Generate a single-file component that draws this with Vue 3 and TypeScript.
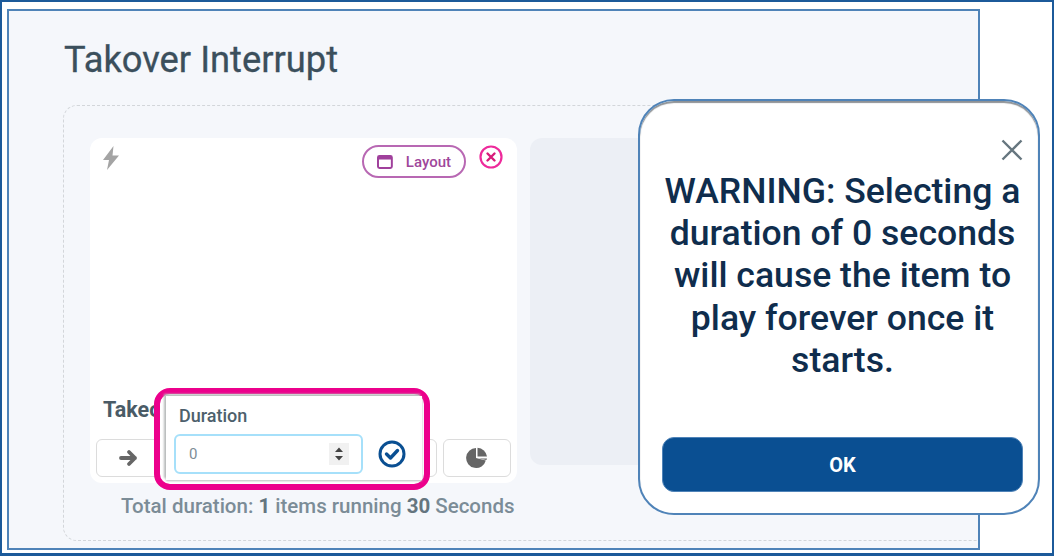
<template>
  <div class="frame">
    <section class="panel">
      <h1 class="title">Takover Interrupt</h1>
      <div class="dropzone">
        <div class="column">
          <div class="card">
            <div class="card-top">
              <svg class="bolt" width="18" height="24" viewBox="0 0 18 24">
                <path d="M11.500 0 1 14h6L5 24 17 9.500h-6.500z" fill="#a4a4a4" />
              </svg>
              <button class="layout-btn">
                <svg width="16" height="14" viewBox="0 0 16 14">
                  <rect x="1" y="1" width="14" height="12" rx="1.500" fill="none" stroke="#a0409c" stroke-width="2" />
                  <rect x="1" y="1" width="14" height="3.500" fill="#a0409c" />
                </svg>
                <span>Layout</span>
              </button>
              <svg class="remove" width="24" height="24" viewBox="0 0 24 24">
                <circle cx="12" cy="12" r="10.500" fill="none" stroke="#ee2a9b" stroke-width="2.200" />
                <path d="m8.500 8.500 7 7m0-7-7 7" stroke="#d81b7a" stroke-width="2.400" stroke-linecap="round" />
              </svg>
            </div>
            <h2 class="card-name">Takeo</h2>
            <div class="actions">
              <button class="action action-first">
                <svg width="20" height="18" viewBox="0 0 20 18">
                  <path d="M2 9h14M10 3l6 6-6 6" fill="none" stroke="#666" stroke-width="3.800" stroke-linecap="round" stroke-linejoin="round" />
                </svg>
              </button>
              <button v-for="n in 3" :key="n" class="action"></button>
              <button class="action action-last">
                <svg width="22" height="22" viewBox="0 0 22 22">
                  <path d="M10 1a10 10 0 1 0 9.800 12.500L10 11z" fill="#666" />
                  <path d="M11.500 .8A10 10 0 0 1 21 9.500h-9.500z" fill="#666" />
                  <path d="M12.500 11.500H21a10 10 0 0 1-.6 1.500z" fill="#666" />
                </svg>
              </button>
            </div>
          </div>
          <p class="total">Total duration: <b>1</b> items running <b>30</b> Seconds</p>
        </div>
        <div class="card-empty"></div>
      </div>
    </section>

    <div class="highlight">
      <div class="popover">
        <label class="pop-label">Duration</label>
        <div class="pop-row">
          <div class="field">
            <span>{{ duration }}</span>
            <span class="spin">
              <svg width="10" height="16" viewBox="0 0 10 16">
                <path d="M5 1.500 9 6H1zM1 10h8l-4 4.500z" fill="#444" />
              </svg>
            </span>
          </div>
          <svg width="28" height="28" viewBox="0 0 28 28">
            <circle cx="14" cy="14" r="12" fill="none" stroke="#0a4f92" stroke-width="3" />
            <path d="m8.500 14 4 4 7-7.500" fill="none" stroke="#0a4f92" stroke-width="3.400" stroke-linecap="round" stroke-linejoin="round" />
          </svg>
        </div>
      </div>
    </div>

    <div class="modal">
      <svg class="modal-close" width="22" height="22" viewBox="0 0 22 22">
        <path d="m1.500 1.500 19 19m0-19-19 19" stroke="#66767f" stroke-width="2.400" />
      </svg>
      <p class="modal-text">WARNING: Selecting a duration of 0 seconds will cause the item to play forever once it starts.</p>
      <button class="ok">OK</button>
    </div>
  </div>
</template>

<script setup lang="ts">
import { ref } from 'vue'

const duration = ref<number>(0)
</script>

<style>
html,
body {
  margin: 0;
  background: #fff;
}
</style>

<style scoped>
.frame {
  position: relative;
  box-sizing: border-box;
  width: 1054px;
  height: 556px;
  padding: 7px 0 0 5px;
  border: 2px solid #1c5a9a;
  border-bottom-width: 3px;
  background: #fff;
  font-family: Roboto, "Liberation Sans", sans-serif;
  overflow: hidden;
}

.panel {
  box-sizing: border-box;
  width: 973px;
  height: 541px;
  padding: 29px 0 0 54px;
  border: 2px solid #4f83b8;
  background: #f5f7fb;
  overflow: hidden;
}

.title {
  margin: 0 0 25px 1px;
  font-size: 36.300px;
  line-height: 40px;
  font-weight: 400;
  color: #3b4f5c;
  -webkit-text-stroke: 0.3px #3b4f5c;
}

.dropzone {
  display: flex;
  gap: 13px;
  box-sizing: border-box;
  width: 1000px;
  height: 436px;
  padding: 32px 0 0 26px;
  border: 1px dashed #d3d6da;
  border-radius: 14px;
}

.column {
  width: 427px;
}

.card {
  display: flex;
  flex-direction: column;
  box-sizing: border-box;
  height: 345px;
  padding: 7px 6px 6px;
  border-radius: 12px;
  background: #fff;
}

.card-top {
  display: flex;
  align-items: flex-start;
}

.bolt {
  margin: 1px 0 0 6px;
}

.layout-btn {
  display: flex;
  align-items: center;
  gap: 13px;
  box-sizing: border-box;
  width: 104px;
  height: 33px;
  margin-left: auto;
  padding: 0 13px;
  border: 2px solid #b868b3;
  border-radius: 17px;
  background: #fff;
  color: #a0479b;
  font-family: inherit;
  font-size: 15px;
  font-weight: 500;
}

.remove {
  margin: 0 8px 0 13px;
}

.card-name {
  margin: auto 0 17px 7px;
  font-size: 21.500px;
  line-height: 24px;
  font-weight: 700;
  color: #4a5b66;
}

.actions {
  display: flex;
  gap: 6px;
}

.action {
  flex: 1;
  display: flex;
  align-items: center;
  justify-content: center;
  box-sizing: border-box;
  height: 38px;
  padding: 0;
  border: 1.500px solid #dcdcdc;
  border-radius: 6px;
  background: #fff;
}

.action-first {
  flex: 0 0 66px;
}

.action-last {
  flex: 0 0 68px;
}

.total {
  margin: 12px 0 0 31px;
  font-size: 20.500px;
  line-height: 22px;
  font-weight: 500;
  color: #7b8c97;
  white-space: nowrap;
}

.total b {
  font-weight: 700;
  color: #64757f;
}

.card-empty {
  flex: none;
  width: 440px;
  height: 327px;
  border-radius: 12px;
  background: #eceff5;
}

.highlight {
  position: absolute;
  left: 152px;
  top: 386px;
  box-sizing: border-box;
  width: 276px;
  height: 102px;
  padding: 2px 2px 4px 6px;
  border: 6px solid #ec008c;
  border-radius: 16px;
  background: #fff;
}

.popover {
  box-sizing: border-box;
  height: 100%;
  padding: 10px 8px 0 8px;
  background: #fff;
  box-shadow: -2px -2px 2px #b9bcbc, 0 1px 2px #b9bcbc;
}

.pop-label {
  display: block;
  margin: 0 0 8px 5px;
  font-size: 18px;
  line-height: 20px;
  font-weight: 500;
  color: #4d606c;
}

.pop-row {
  display: flex;
  align-items: center;
  gap: 15px;
}

.field {
  display: flex;
  align-items: center;
  justify-content: space-between;
  box-sizing: border-box;
  width: 189px;
  height: 40px;
  padding: 0 13px;
  border: 2px solid #a6e0fa;
  border-radius: 6px;
  color: #7d8d97;
  font-size: 15px;
}

.spin {
  display: flex;
  align-items: center;
  justify-content: center;
  width: 20px;
  height: 22px;
  margin-right: -1px;
  background: #f1f1f1;
}

.modal {
  position: absolute;
  left: 636px;
  top: 97px;
  box-sizing: border-box;
  width: 402px;
  height: 416px;
  padding: 69px 15px 21px 22px;
  display: flex;
  flex-direction: column;
  border: 2px solid #4f83b8;
  border-radius: 36px;
  background: #fff;
  box-shadow: inset 0 2px 1px #8e9296;
}

.modal-close {
  position: absolute;
  right: 15px;
  top: 38px;
}

.modal-text {
  margin: 0;
  font-size: 35.600px;
  line-height: 42.200px;
  font-weight: 500;
  text-align: center;
  color: #0f2d4d;
}

.ok {
  height: 55px;
  margin-top: auto;
  border: 1px solid #4f83b8;
  border-radius: 12px;
  background: #0a4f92;
  color: #fff;
  font-family: inherit;
  font-size: 20px;
  font-weight: 700;
}
</style>
